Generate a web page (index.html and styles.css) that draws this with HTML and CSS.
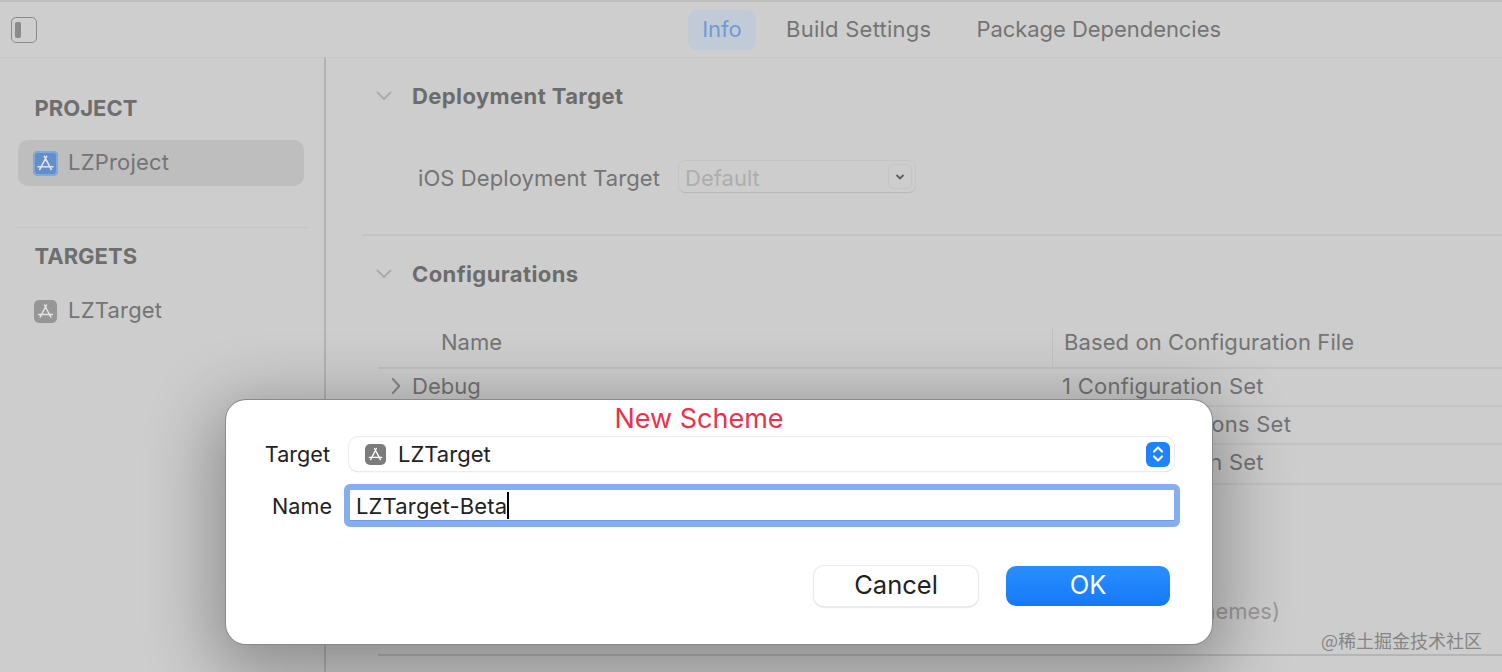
FILE: index.html
```html
<!DOCTYPE html>
<html lang="en">
<head>
<meta charset="utf-8">
<title>New Scheme</title>
<link rel="stylesheet" href="styles.css">
</head>
<body>
<svg class="defs" width="0" height="0" aria-hidden="true">
  <symbol id="appstore" viewBox="0 0 24 24">
    <path d="M10.9 5.2 17.6 17.8M13.1 5.2 6.4 17.8M4.8 15.2H19.2" fill="none" stroke="currentColor" stroke-width="1.5" stroke-linecap="round"/>
  </symbol>
</svg>
<div class="app">
  <header class="toolbar">
    <div class="toggle"><span class="toggle-bar"></span></div>
    <nav class="tabs">
      <span class="tab tab-active">Info</span>
      <span class="tab tab-build">Build Settings</span>
      <span class="tab tab-package">Package Dependencies</span>
    </nav>
  </header>
  <div class="body">
    <aside class="sidebar">
      <h2 class="side-title">PROJECT</h2>
      <div class="side-item side-item-selected">
        <span class="app-icon app-icon-blue"><svg><use href="#appstore"/></svg></span>
        <span>LZProject</span>
      </div>
      <hr class="side-rule">
      <h2 class="side-title">TARGETS</h2>
      <div class="side-item">
        <span class="app-icon app-icon-gray"><svg><use href="#appstore"/></svg></span>
        <span>LZTarget</span>
      </div>
    </aside>
    <main class="main">
      <section class="section section-deploy">
        <div class="section-head">
          <svg class="chev" viewBox="0 0 16 10"><path d="M1.5 1.5 8 8l6.5-6.5"/></svg>
          <h3>Deployment Target</h3>
        </div>
        <div class="deploy-row">
          <span class="deploy-label">iOS Deployment Target</span>
          <div class="deploy-select">
            <span class="deploy-value">Default</span>
            <span class="deploy-arrow"><svg viewBox="0 0 10 6"><path d="M1.5 1 5 4.5 8.5 1"/></svg></span>
          </div>
        </div>
      </section>
      <section class="section section-config">
        <div class="section-head">
          <svg class="chev" viewBox="0 0 16 10"><path d="M1.5 1.5 8 8l6.5-6.5"/></svg>
          <h3>Configurations</h3>
        </div>
        <div class="table">
          <div class="thead">
            <span class="th-name">Name</span>
            <span class="th-file">Based on Configuration File</span>
          </div>
          <div class="tr">
            <span class="td-name"><svg class="row-chev" viewBox="0 0 8 14"><path d="M1.5 1.5 6.5 7l-5 5.5"/></svg>Debug</span>
            <span class="td-file">1 Configuration Set</span>
          </div>
          <div class="tr">
            <span class="td-name"></span>
            <span class="td-file td-file-wide">2 Configurations Set</span>
          </div>
          <div class="tr tr-last">
            <span class="td-name"></span>
            <span class="td-file">1 Configuration Set</span>
          </div>
        </div>
        <div class="usage">
          <span class="usage-text">(All Schemes)</span>
        </div>
      </section>
    </main>
  </div>
</div>

<div class="dialog">
  <h1 class="dialog-title">New Scheme</h1>
  <div class="field field-target">
    <label class="field-label">Target</label>
    <div class="popup">
      <span class="app-icon app-icon-dark"><svg><use href="#appstore"/></svg></span>
      <span class="popup-text">LZTarget</span>
      <span class="popup-stepper">
        <svg viewBox="0 0 12 20"><path d="M2 7.5 6 3.5l4 4M2 12.5l4 4 4-4"/></svg>
      </span>
    </div>
  </div>
  <div class="field field-name">
    <label class="field-label">Name</label>
    <div class="input"><span class="input-text">LZTarget-Beta</span><span class="caret"></span></div>
  </div>
  <div class="actions">
    <button class="btn btn-cancel">Cancel</button>
    <button class="btn btn-ok">OK</button>
  </div>
</div>
<div class="watermark">@稀土掘金技术社区</div>
</body>
</html>
```
FILE: styles.css
```css
* { box-sizing: border-box; }
html, body { margin: 0; height: 100%; }
body {
  position: relative;
  overflow: hidden;
  width: 1502px;
  height: 672px;
  background: #cdcdcd;
  color: #747474;
  font-family: Inter, "Noto Sans", sans-serif;
  font-size: 22px;
}
.defs { position: absolute; }
.app { display: flex; flex-direction: column; height: 672px; }

/* toolbar */
.toolbar {
  display: flex;
  align-items: center;
  height: 58px;
  flex: none;
  padding-left: 11px;
  border-top: 2px solid #bdbdbd;
  border-bottom: 1px solid #c5c5c5;
  background: #cecece;
}
.toggle {
  width: 26px;
  height: 26px;
  padding: 4px 3px;
  border: 1.5px solid #8a8a8a;
  border-radius: 5px;
}
.toggle-bar { display: block; width: 6px; height: 100%; background: #8a8a8a; border-radius: 2px; }
.tabs { display: flex; align-items: center; margin-left: 651px; gap: 0; }
.tab { padding: 0 24px 2px 22px; color: #747474; line-height: 38px; }
.tab-build { letter-spacing: 0.25px; padding-right: 23px; }
.tab-package { letter-spacing: -0.05px; }
.tab-active {
  width: 68px;
  padding: 0 0 2px;
  text-align: center;
  color: #6f9bd4;
  background: #c1cad7;
  border-radius: 9px;
  margin-right: 8px;
}

/* sidebar */
.body { display: flex; flex: 1; min-height: 0; }
.sidebar {
  width: 326px;
  flex: none;
  padding: 36px 20px 0 18px;
  border-right: 2px solid #b2b2b2;
}
.side-title {
  margin: 0;
  padding-left: 16.5px;
  font-size: 22px;
  line-height: 28px;
  font-weight: 700;
  color: #6e6e6e;
}
.side-item {
  display: flex;
  align-items: center;
  gap: 10px;
  height: 46px;
  margin-top: 18px;
  padding: 0 0 2px 15px;
  border-radius: 10px;
  letter-spacing: 0.2px;
}
.side-item-selected { background: #bebebe; }
.side-rule {
  margin: 41px -4px 14px -2px;
  border: 0;
  border-top: 1px solid #c4c4c4;
}
.app-icon {
  display: inline-flex;
  width: 25px;
  height: 25px;
  flex: none;
  border-radius: 5px;
  color: #e4e4e4;
}
.app-icon svg { width: 100%; height: 100%; }
.side-item .app-icon { margin-top: 2px; }
.app-icon-blue { background: #628fcb; box-shadow: inset 0 0 0 2px #7fa8dd; }
.app-icon-gray { background: #969696; width: 23px; height: 23px; margin-left: 1px; margin-right: 1px; }
.app-icon-dark { background: #7c7c7c; color: #fff; width: 21px; height: 21px; }

/* main */
.main { flex: 1; min-width: 0; }
.section { margin-left: 36px; }
.section-deploy { height: 178px; padding-top: 24px; border-bottom: 2px solid #c3c3c3; }
.section-head { display: flex; align-items: center; height: 28px; padding-left: 14px; }
.section-head h3 { margin: 0 0 0 20px; font-size: 22px; font-weight: 700; color: #6c6c6c; line-height: 28px; letter-spacing: 0.4px; }
.chev { width: 16px; height: 10px; fill: none; stroke: #ababab; stroke-width: 2; stroke-linecap: round; stroke-linejoin: round; }
.deploy-row { display: flex; align-items: center; gap: 18px; margin-top: 50px; padding-left: 56px; }
.deploy-label { height: 33px; line-height: 37px; letter-spacing: 0.1px; }
.deploy-select {
  display: flex;
  align-items: center;
  justify-content: space-between;
  width: 238px;
  height: 33px;
  padding: 0 3px 0 6px;
  border: 1px solid #c4c4c4;
  border-bottom-color: #b8b8b8;
  border-radius: 7px;
  color: #aeaeae;
}
.deploy-value { padding-top: 2px; }
.deploy-arrow {
  display: flex;
  align-items: center;
  justify-content: center;
  width: 24px;
  height: 25px;
  border: 1px solid #c4c4c4;
  border-radius: 6px;
}
.deploy-arrow svg { width: 10px; height: 6px; fill: none; stroke: #5e5e5e; stroke-width: 1.8; }
.section-config { padding-top: 24px; }
.table { margin: 40px 0 0 16px; }
.thead {
  display: flex;
  height: 41px;
  border-bottom: 2px solid #c1c1c1;
}
.th-name { width: 675px; padding-left: 63px; line-height: 28px; border-right: 1px solid #c2c2c2; }
.th-file { padding-left: 11px; line-height: 28px; letter-spacing: 0.1px; }
.tr { display: flex; align-items: center; height: 38px; padding-bottom: 2px; border-bottom: 2px solid #c3c3c3; }
.td-name { display: flex; align-items: center; width: 684px; padding-left: 12px; flex: none; }
.td-file { letter-spacing: 0.25px; }
.td-file-wide { margin-left: 11px; }
.tr-last { height: 40px; padding-bottom: 4px; }
.row-chev { width: 12px; height: 18px; margin-right: 10px; fill: none; stroke: #868686; stroke-width: 1.6; stroke-linecap: round; stroke-linejoin: round; }
.usage {
  display: flex;
  justify-content: flex-end;
  align-items: center;
  height: 171px;
  padding: 82px 222px 0 0;
  border-bottom: 2px solid #b5b5b5;
  margin-left: 16px;
}
.usage-text { color: #9a9a9a; white-space: nowrap; }

/* dialog */
.dialog {
  position: absolute;
  left: 226px;
  top: 400px;
  width: 986px;
  height: 244px;
  background: #fff;
  border-radius: 20px;
  box-shadow: 0 0 0 1px #8a8a8a, 0 18px 70px 12px rgba(0, 0, 0, 0.32);
  color: #222;
  font-size: 22px;
}
.dialog-title {
  margin: 0;
  height: 37px;
  line-height: 37px;
  text-align: center;
  font-size: 27px;
  font-weight: 400;
  color: #ea3349;
  padding-right: 40px;
}
.field { display: flex; align-items: center; }
.field-label { width: 104px; text-align: right; font-size: 21.6px; }
.field-target { height: 34px; }
.popup {
  display: flex;
  align-items: center;
  gap: 12px;
  width: 825px;
  height: 34px;
  margin-left: 19px;
  padding: 0 4px 0 16px;
  border-radius: 9px;
  box-shadow: 0 0 0 1px #ececec, 0 1px 1px #bdbdbd;
  background: #fff;
}
.popup-text { flex: 1; }
.popup-stepper {
  display: flex;
  width: 24px;
  height: 25px;
  align-items: center;
  justify-content: center;
  background: #1f82fb;
  border-radius: 6px;
}
.popup-stepper svg { width: 12px; height: 20px; fill: none; stroke: #fff; stroke-width: 2.2; stroke-linecap: round; stroke-linejoin: round; }
.field-name { margin-top: 13px; height: 43px; }
.field-name .field-label { width: 106px; }
.input {
  display: flex;
  align-items: center;
  width: 836px;
  height: 43px;
  margin-left: 12px;
  padding-left: 6px;
  border: 6px solid #85aef0;
  border-radius: 6px;
  background: #fff;
  box-shadow: inset 0 -1px 0 #6f9be6;
}
.input-text { letter-spacing: 0.15px; }
.caret { width: 2px; height: 27px; margin-left: 0; background: #000; }
.actions { display: flex; justify-content: flex-end; gap: 28px; margin-top: 39px; padding-right: 42px; }
.btn {
  width: 164px;
  height: 40px;
  padding: 0 0 2px;
  border: 0;
  border-radius: 10px;
  font: 400 25.5px/38px Inter, "Noto Sans", sans-serif;
}
.btn-cancel { background: #fff; color: #222; box-shadow: 0 0 0 1px #ececec, 0 1px 2px #b0b0b0; }
.btn-ok { background: linear-gradient(#2a8ffc, #1479f8); color: #fff; }

.watermark {
  position: absolute;
  right: 20px;
  top: 628px;
  font-family: "Noto Sans CJK SC", "Noto Sans", sans-serif;
  font-size: 18px;
  line-height: 24px;
  color: #858585;
}
```
